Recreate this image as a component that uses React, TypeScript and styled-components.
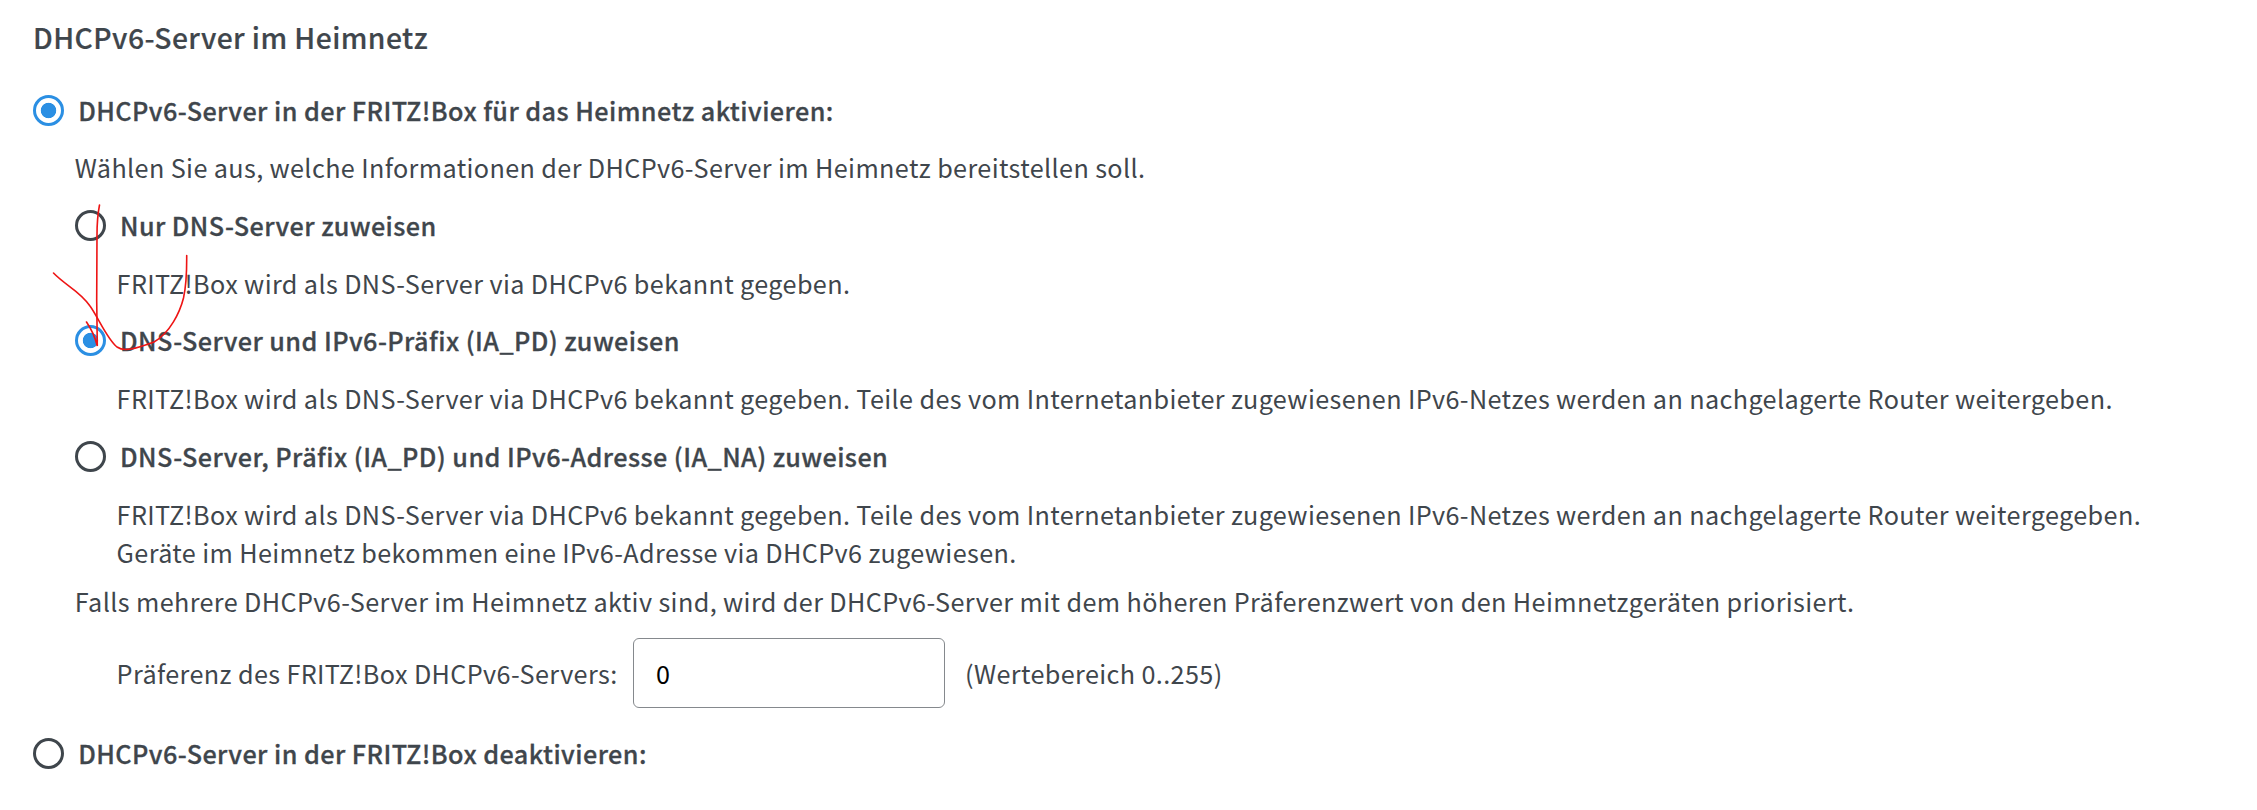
import React, { useState } from 'react';
import styled, { createGlobalStyle } from 'styled-components';

const GlobalStyle = createGlobalStyle`
  * { box-sizing: border-box; }
  body {
    margin: 0;
    background: #fff;
    color: #3f464c;
    font: 400 25.2px/38px "Noto Sans CJK SC", "Open Sans", sans-serif;
    letter-spacing: 0.38px;
  }
`;

const Page = styled.main`
  position: relative;
  width: 2257px;
  height: 810px;
  overflow: hidden;
  padding: 17px 33px 0;
`;

const Heading = styled.h2`
  margin: 0 0 34.8px;
  font-size: 28.3px;
  font-weight: 500;
  line-height: 39px;
  letter-spacing: 0.42px;
  -webkit-text-stroke: 0.2px currentColor;
`;

const Group = styled.div`
  padding-left: 41.8px;
`;

const Option = styled.label`
  display: flex;
  align-items: center;
  gap: 14.2px;
  height: 38px;
  margin-bottom: 19.68px;
  font-weight: 500;
  letter-spacing: 0.44px;
  -webkit-text-stroke: 0.3px currentColor;
`;

const Radio = styled.input`
  appearance: none;
  flex: none;
  width: 31px;
  height: 31px;
  margin: 1px 0 0;
  border: 3px solid #3f464c;
  border-radius: 50%;
  background: #fff;

  &:checked {
    border-color: #2b8fe3;
    background: radial-gradient(circle, #2b8fe3 7.3px, #fff 8.1px);
  }
`;

const Text = styled.p<{ $gap?: number }>`
  margin: 0 0 ${(p) => p.$gap ?? 19.68}px;
`;

const Preference = styled.div`
  display: flex;
  align-items: center;
  height: 70px;
  margin-bottom: 26px;
`;

const ValueField = styled.input`
  width: 312px;
  height: 70px;
  margin: 0 20px 0 15.5px;
  padding: 0 22px;
  border: 1px solid #85898d;
  border-radius: 6px;
  background: #fff;
  color: #000;
  font: inherit;
  outline: none;
`;

const Strokes = styled.svg`
  position: absolute;
  left: 0;
  top: 0;
  pointer-events: none;
`;

export default function App() {
  const [enabled, setEnabled] = useState(true);
  const [mode, setMode] = useState('prefix');
  const [preference, setPreference] = useState('0');

  return (
    <Page>
      <GlobalStyle />
      <Heading>DHCPv6-Server im Heimnetz</Heading>
      <Option>
        <Radio type="radio" name="server" checked={enabled} onChange={() => setEnabled(true)} />
        DHCPv6-Server in der FRITZ!Box für das Heimnetz aktivieren:
      </Option>
      <Group>
        <Text>Wählen Sie aus, welche Informationen der DHCPv6-Server im Heimnetz bereitstellen soll.</Text>
        <Option>
          <Radio type="radio" name="mode" checked={mode === 'dns'} onChange={() => setMode('dns')} />
          Nur DNS-Server zuweisen
        </Option>
        <Group>
          <Text>FRITZ!Box wird als DNS-Server via DHCPv6 bekannt gegeben.</Text>
        </Group>
        <Option>
          <Radio type="radio" name="mode" checked={mode === 'prefix'} onChange={() => setMode('prefix')} />
          DNS-Server und IPv6-Präfix (IA_PD) zuweisen
        </Option>
        <Group>
          <Text>
            FRITZ!Box wird als DNS-Server via DHCPv6 bekannt gegeben. Teile des vom Internetanbieter zugewiesenen
            IPv6-Netzes werden an nachgelagerte Router weitergeben.
          </Text>
        </Group>
        <Option>
          <Radio type="radio" name="mode" checked={mode === 'address'} onChange={() => setMode('address')} />
          DNS-Server, Präfix (IA_PD) und IPv6-Adresse (IA_NA) zuweisen
        </Option>
        <Group>
          <Text $gap={11}>
            FRITZ!Box wird als DNS-Server via DHCPv6 bekannt gegeben. Teile des vom Internetanbieter zugewiesenen
            IPv6-Netzes werden an nachgelagerte Router weitergegeben.
            <br />
            Geräte im Heimnetz bekommen eine IPv6-Adresse via DHCPv6 zugewiesen.
          </Text>
        </Group>
        <Text $gap={18.8}>
          Falls mehrere DHCPv6-Server im Heimnetz aktiv sind, wird der DHCPv6-Server mit dem höheren Präferenzwert von
          den Heimnetzgeräten priorisiert.
        </Text>
        <Group>
          <Preference>
            <label htmlFor="preference">Präferenz des FRITZ!Box DHCPv6-Servers:</label>
            <ValueField id="preference" value={preference} onChange={(e) => setPreference(e.target.value)} />
            <span>(Wertebereich 0..255)</span>
          </Preference>
        </Group>
      </Group>
      <Option>
        <Radio type="radio" name="server" checked={!enabled} onChange={() => setEnabled(false)} />
        DHCPv6-Server in der FRITZ!Box deaktivieren:
      </Option>
      <Strokes width="240" height="380" fill="none" stroke="#ee1414" strokeWidth="1.6" strokeLinecap="round">
        <path d="M99.5 205 Q97 218 97 235 L96.7 300 L97.3 346 Q94 333 86.5 322" />
        <path d="M53.5 273 C66 286 80 291 90 306 C98 317 107 339 117 347 C124 352 135 349 154 342 C170 333 180 312 183.5 298 C187 282 186.7 270 186.7 255.5" />
      </Strokes>
    </Page>
  );
}
